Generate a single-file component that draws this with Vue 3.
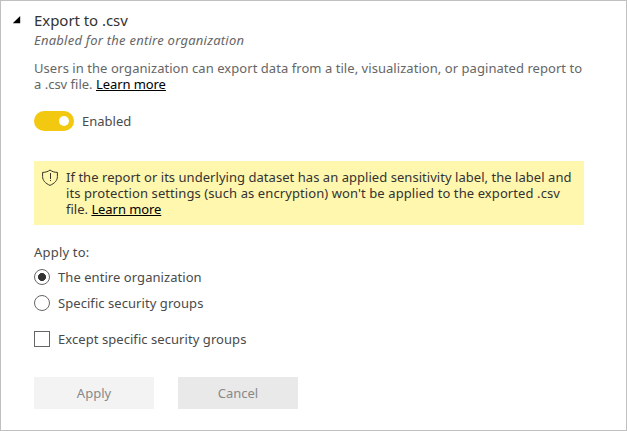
<script setup>
import { ref } from 'vue'

const open = ref(true)
const enabled = ref(true)
const scope = ref('all')
const except = ref(false)
const scopes = [
  { id: 'all', label: 'The entire organization', cls: 'entire' },
  { id: 'groups', label: 'Specific security groups', cls: 'specific' },
]
</script>

<template>
  <main class="panel">
    <button class="caret" :aria-expanded="open" aria-label="Toggle section" @click="open = !open">
      <svg width="8" height="8" viewBox="0 0 8 8"><path d="M7.2 0V7.2H-.2Z" fill="#000" /></svg>
    </button>
    <section class="content">
      <h1 class="title"><span>Export to .csv</span></h1>
      <p class="status">Enabled for the entire organization</p>
      <p class="description">
        <span class="d1">Users in the organization can export data from a tile, visualization, or paginated report to</span><br />
        <span class="d2">a .csv file. <a href="#">Learn more</a></span>
      </p>

      <div class="switch-row">
        <button class="switch" :class="{ on: enabled }" role="switch" :aria-checked="enabled" aria-label="Enabled" @click="enabled = !enabled">
          <span class="knob"></span>
        </button>
        <span class="switch-label">Enabled</span>
      </div>

      <div class="notice">
        <svg class="shield" width="16" height="17" viewBox="0 0 16 17" fill="none" stroke="#37352a">
          <path d="M8 1C6.2 2.5 3.7 3.4 .6 3.4V7.5C.6 11.6 3.5 14.4 8 16.4C12.5 14.4 15.4 11.6 15.4 7.5V3.4C12.3 3.4 9.8 2.5 8 1Z" />
          <path d="M8.5 4V10M8.5 11V12" />
        </svg>
        <p>
          <span class="n1">If the report or its underlying dataset has an applied sensitivity label, the label and</span><br />
          <span class="n2">its protection settings (such as encryption) won't be applied to the exported .csv</span><br />
          <span class="n3">file. <a href="#">Learn more</a></span>
        </p>
      </div>

      <p class="apply-to">Apply to:</p>
      <div class="choices">
        <label v-for="item in scopes" :key="item.id" class="choice">
          <input v-model="scope" class="radio" type="radio" name="scope" :value="item.id" />
          <span :class="item.cls">{{ item.label }}</span>
        </label>
      </div>
      <label class="choice except">
        <input v-model="except" class="check" type="checkbox" />
        <span class="except-label">Except specific security groups</span>
      </label>

      <div class="actions">
        <button class="action apply" disabled>Apply</button>
        <button class="action cancel">Cancel</button>
      </div>
    </section>
  </main>
</template>

<style>
body {
  background: #fff;
}
</style>

<style scoped>
.panel {
  box-sizing: border-box;
  width: 627px;
  height: 431px;
  border: 1px solid #c0c0c0;
  display: flex;
  align-items: flex-start;
  overflow: hidden;
  font: 13px/16px "Noto Sans", "Open Sans", sans-serif;
  color: #4a4a4a;
  white-space: nowrap;
}
button {
  border: 0;
  padding: 0;
  font: inherit;
}
p, h1 {
  margin: 0;
}
a {
  color: #000;
  letter-spacing: -0.08px;
  text-decoration: underline;
  text-decoration-thickness: 1px;
  text-decoration-skip-ink: none;
  text-underline-offset: 1px;
}
.caret {
  margin: 15px 13px 0 12px;
  width: 8px;
  height: 8px;
  background: none;
  display: flex;
}
.content {
  width: 550px;
}
.title {
  margin-top: 9px;
  font-size: 15px;
  font-weight: 400;
  line-height: 20px;
  letter-spacing: -0.05px;
  color: #333;
}
.status {
  margin-top: 1px;
  line-height: 18px;
  font-style: italic;
  letter-spacing: 0.24px;
  color: #666;
}
.description {
  margin-top: 11px;
  color: #666;
}
.d1 {
  letter-spacing: 0.05px;
}
.n1 {
  letter-spacing: 0.04px;
}
.n2 {
  letter-spacing: 0.09px;
}
.switch-row {
  margin-top: 19px;
  display: flex;
  align-items: center;
  gap: 8px;
  height: 20px;
}
.switch {
  width: 40px;
  height: 20px;
  border-radius: 10px;
  background: #999;
  padding: 0 5px;
  display: flex;
  align-items: center;
}
.switch.on {
  background: #f2c811;
  justify-content: flex-end;
}
.knob {
  width: 10px;
  height: 10px;
  border-radius: 50%;
  background: #fff;
}
.notice {
  box-sizing: border-box;
  margin-top: 30px;
  height: 64px;
  padding: 8px 8px;
  background: #fff7ad;
  display: flex;
  gap: 8px;
  color: #333;
}
.shield {
  flex: none;
}
.apply-to {
  margin-top: 19px;
  letter-spacing: 0.2px;
}
.choices {
  margin-top: 4px;
  display: flex;
  flex-direction: column;
}
.choice {
  display: flex;
  align-items: center;
  gap: 8px;
  height: 26px;
  letter-spacing: 0.06px;
}
.except {
  margin-top: 10px;
}
.radio, .check {
  appearance: none;
  box-sizing: border-box;
  width: 16px;
  height: 16px;
  margin: 0;
  border: 1px solid #666;
  background: #fff;
}
.radio {
  border-radius: 50%;
}
.radio:checked {
  background: radial-gradient(circle, #333 0 3.7px, #fff 4.3px);
}
.check:checked {
  background: #333;
}
.actions {
  margin-top: 25px;
  display: flex;
  gap: 24px;
}
.action {
  width: 120px;
  height: 32px;
  color: #888;
}
.apply {
  background: #f3f3f3;
}
.cancel {
  background: #e9e9e9;
}
</style>
